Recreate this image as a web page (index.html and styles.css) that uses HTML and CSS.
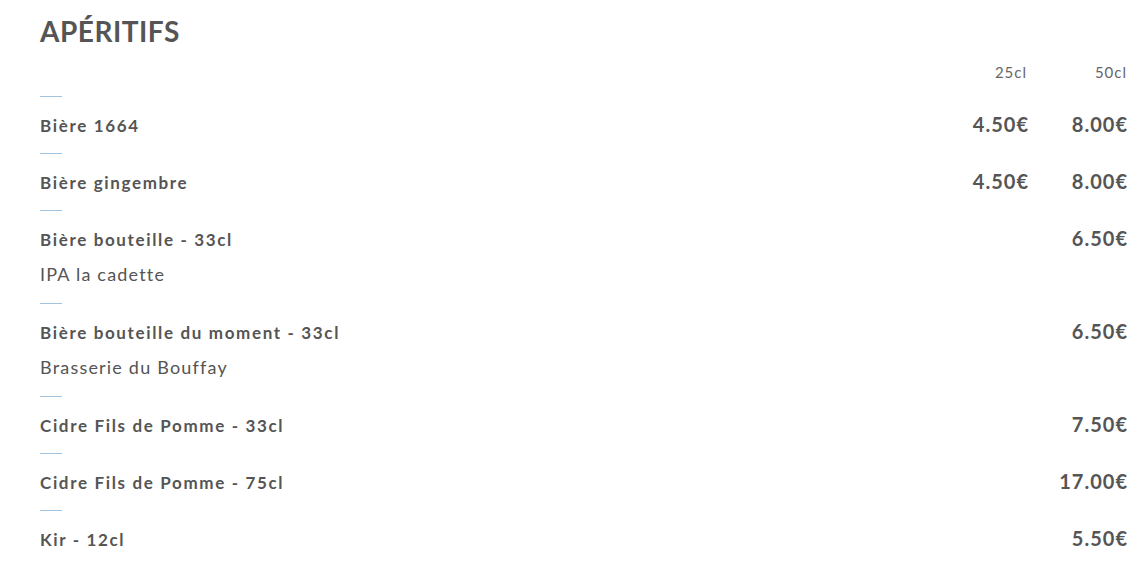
FILE: index.html
```html
<!DOCTYPE html>
<html lang="fr">
<head>
<meta charset="utf-8">
<link rel="stylesheet" href="styles.css">
</head>
<body>
<section class="menu">
  <h1 class="title">APÉRITIFS</h1>
  <div class="head">
    <span class="col">25cl</span>
    <span class="col">50cl</span>
  </div>
  <div class="item">
    <div class="sep"></div>
    <div class="row"><span class="name">Bière 1664</span><span class="price">4.50€</span><span class="price">8.00€</span></div>
  </div>
  <div class="item">
    <div class="sep"></div>
    <div class="row"><span class="name">Bière gingembre</span><span class="price">4.50€</span><span class="price">8.00€</span></div>
  </div>
  <div class="item">
    <div class="sep"></div>
    <div class="row"><span class="name">Bière bouteille - 33cl</span><span class="price">6.50€</span></div>
    <p class="desc">IPA la cadette</p>
  </div>
  <div class="item">
    <div class="sep"></div>
    <div class="row"><span class="name">Bière bouteille du moment - 33cl</span><span class="price">6.50€</span></div>
    <p class="desc">Brasserie du Bouffay</p>
  </div>
  <div class="item">
    <div class="sep"></div>
    <div class="row"><span class="name">Cidre Fils de Pomme - 33cl</span><span class="price">7.50€</span></div>
  </div>
  <div class="item">
    <div class="sep"></div>
    <div class="row"><span class="name">Cidre Fils de Pomme - 75cl</span><span class="price">17.00€</span></div>
  </div>
  <div class="item">
    <div class="sep"></div>
    <div class="row"><span class="name">Kir - 12cl</span><span class="price">5.50€</span></div>
  </div>
</section>
</body>
</html>
```
FILE: styles.css
```css
html, body {
  margin: 0;
  padding: 0;
  background: #fff;
}
body {
  font-family: Lato, "Open Sans", sans-serif;
  color: #555;
}
.menu {
  padding: 14px 17px 0 40px;
}
.title {
  margin: 0;
  font-size: 28px;
  line-height: 34px;
  font-weight: 700;
  letter-spacing: 0.5px;
  color: #555;
}
.head {
  display: flex;
  justify-content: flex-end;
  margin-top: 14px;
  margin-bottom: 14px;
}
.col {
  width: 100px;
  text-align: right;
  font-size: 15px;
  line-height: 20px;
  letter-spacing: 1px;
  color: #666;
}
.sep {
  width: 22px;
  height: 1px;
  background: #9dc5e3;
}
.row {
  display: flex;
  align-items: baseline;
  height: 24px;
  margin-top: 15px;
  line-height: 24px;
}
.item {
  padding-bottom: 17px;
}
.name {
  flex: 1;
  font-size: 17px;
  font-weight: 700;
  letter-spacing: 1.65px;
}
.price {
  width: 100px;
  text-align: right;
  font-size: 20px;
  font-weight: 700;
  letter-spacing: 1px;
  margin-right: -1px;
}
.desc {
  margin: 12px 0 0;
  font-size: 18px;
  line-height: 24px;
  letter-spacing: 1.2px;
}
```
